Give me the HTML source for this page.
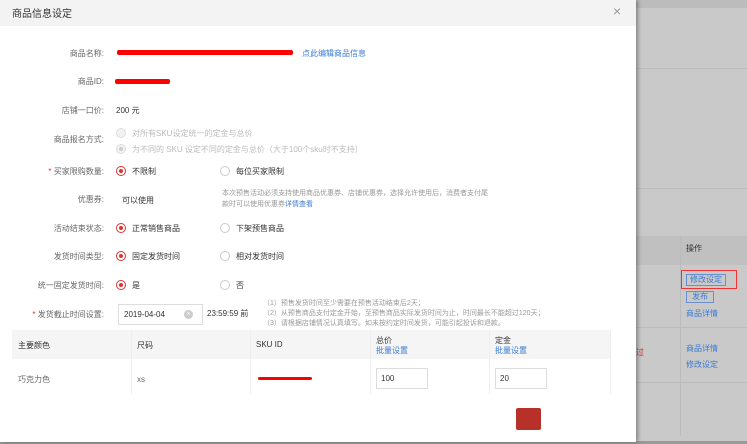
<!DOCTYPE html>
<html><head><meta charset="utf-8"><style>
*{margin:0;padding:0;box-sizing:border-box}
body{width:747px;height:444px;overflow:hidden;background:#c9c9c9;font-family:"Liberation Sans","Noto Sans CJK SC",sans-serif;font-size:8px;color:#333;position:relative}
.a{position:absolute;white-space:nowrap}
.lab{position:absolute;right:532px;color:#666;white-space:nowrap}
.modal{position:absolute;left:0;top:0;width:636px;height:442px;background:#fff;box-shadow:2px 0 4px rgba(0,0,0,.35);overflow:hidden}
.hd{height:26px;background:#f3f3f3;padding:5px 12px;font-size:10px;color:#333}
.r{position:absolute;width:10px;height:10px;border-radius:50%;border:1px solid #ccc;background:#fff}
.r.on{border-color:#d33}
.r.on::after{content:"";position:absolute;left:2px;top:2px;width:4px;height:4px;border-radius:50%;background:#d33}
.r.dis{background:#f2f2f2;border-color:#ddd}
.r.dis.on::after{background:#ccc}
.red{position:absolute;height:5px;background:#f00;border-radius:2px}
.blue{color:#3a7bd5}
.grey{color:#999}
</style></head><body>
<div class="a" style="left:636px;top:0;width:111px;height:8px;background:#bcbcbc"></div>
<div class="a" style="left:636px;top:68px;width:111px;height:1px;background:#bdbdbd"></div>
<div class="a" style="left:636px;top:188px;width:111px;height:1px;background:#bdbdbd"></div>
<div class="a" style="left:636px;top:236px;width:111px;height:29px;background:#c0c0c0"></div>
<div class="a" style="left:680px;top:236px;width:1px;height:200px;background:#bbb"></div>
<div class="a" style="left:636px;top:327px;width:111px;height:1px;background:#bbb"></div>
<div class="a" style="left:636px;top:382px;width:111px;height:1px;background:#bbb"></div>
<div class="a" style="left:686px;top:243px;color:#333">操作</div>
<div class="a" style="left:681px;top:270px;width:56px;height:19px;border:1px solid #e33"></div>
<div class="a blue" style="left:686px;top:274px;border:1px solid #6a8fd0;padding:0 3px;line-height:10px">修改设定</div>
<div class="a blue" style="left:686px;top:291px;border:1px solid #6a8fd0;padding:0 5px;line-height:10px">发布</div>
<div class="a blue" style="left:686px;top:308px">商品详情</div>
<div class="a blue" style="left:686px;top:343px">商品详情</div>
<div class="a blue" style="left:686px;top:359px">修改设定</div>
<div class="a" style="left:636px;top:347px;color:#c33">过</div>
<div class="a" style="left:0;top:441px;width:747px;height:3px;background:#9a9a9a"></div>

<div class="modal">
<div class="hd">商品信息设定</div>
<div class="a" style="left:613px;top:3px;font-size:14px;color:#999">×</div>

<div class="lab" style="top:48px">商品名称:</div>
<div class="red" style="left:117px;top:50px;width:176px"></div>
<div class="a blue" style="left:302px;top:48px">点此编辑商品信息</div>

<div class="lab" style="top:76px">商品ID:</div>
<div class="red" style="left:115px;top:79px;width:55px"></div>

<div class="lab" style="top:105px">店铺一口价:</div>
<div class="a" style="left:116px;top:105px">200 元</div>

<div class="lab" style="top:134px">商品报名方式:</div>
<div class="r dis" style="left:116px;top:128px"></div>
<div class="a" style="left:132px;top:128px;color:#bbb">对所有SKU设定统一的定金与总价</div>
<div class="r dis on" style="left:116px;top:144px"></div>
<div class="a" style="left:132px;top:144px;color:#bbb">为不同的 SKU 设定不同的定金与总价（大于100个sku时不支持）</div>

<div class="lab" style="top:166px"><span style="color:#d33">* </span>买家限购数量:</div>
<div class="r on" style="left:116px;top:166px"></div>
<div class="a" style="left:132px;top:166px">不限制</div>
<div class="r" style="left:220px;top:166px"></div>
<div class="a" style="left:236px;top:166px">每位买家限制</div>

<div class="lab" style="top:194px">优惠券:</div>
<div class="a" style="left:122px;top:195px">可以使用</div>
<div class="a grey" style="left:222px;top:188px;font-size:7px;line-height:11px">本次预售活动必须支持使用商品优惠券、店铺优惠券，选择允许使用后，消费者支付尾<br>款时可以使用优惠券<span class="blue">详情查看</span></div>

<div class="lab" style="top:223px">活动结束状态:</div>
<div class="r on" style="left:116px;top:223px"></div>
<div class="a" style="left:132px;top:223px">正常销售商品</div>
<div class="r" style="left:220px;top:223px"></div>
<div class="a" style="left:236px;top:223px">下架预售商品</div>

<div class="lab" style="top:251px">发货时间类型:</div>
<div class="r on" style="left:116px;top:251px"></div>
<div class="a" style="left:132px;top:251px">固定发货时间</div>
<div class="r" style="left:220px;top:251px"></div>
<div class="a" style="left:236px;top:251px">相对发货时间</div>

<div class="lab" style="top:280px">统一固定发货时间:</div>
<div class="r on" style="left:116px;top:280px"></div>
<div class="a" style="left:132px;top:280px">是</div>
<div class="r" style="left:220px;top:280px"></div>
<div class="a" style="left:236px;top:280px">否</div>

<div class="lab" style="top:309px"><span style="color:#d33">* </span>发货截止时间设置:</div>
<div class="a" style="left:118px;top:304px;width:85px;height:21px;border:1px solid #ddd"></div>
<div class="a" style="left:124px;top:310px">2019-04-04</div>
<div class="a" style="left:184px;top:310px;width:9px;height:9px;border-radius:50%;background:#ccc;color:#fff;font-size:7px;line-height:9px;text-align:center">×</div>
<div class="a" style="left:207px;top:308px">23:59:59 前</div>
<div class="a grey" style="left:263px;top:299px;font-size:7px;line-height:10px">（1）预售发货时间至少需要在预售活动结束后2天；<br>（2）从预售商品支付定金开始，至预售商品实际发货时间为止，时间最长不能超过120天；<br>（3）请根据店铺情况认真填写。如未按约定时间发货，可能引起投诉和退款。</div>

<div class="a" style="left:12px;top:330px;width:598px;height:29px;background:#f5f5f5"></div>
<div class="a" style="left:131px;top:330px;width:1px;height:64px;background:#eee"></div>
<div class="a" style="left:250px;top:330px;width:1px;height:64px;background:#eee"></div>
<div class="a" style="left:370px;top:330px;width:1px;height:64px;background:#eee"></div>
<div class="a" style="left:489px;top:330px;width:1px;height:64px;background:#eee"></div>
<div class="a" style="left:610px;top:330px;width:1px;height:64px;background:#eee"></div>
<div class="a" style="left:18px;top:340px">主要颜色</div>
<div class="a" style="left:137px;top:340px">尺码</div>
<div class="a" style="left:256px;top:340px">SKU ID</div>
<div class="a" style="left:376px;top:336px;line-height:10px">总价<br><span class="blue">批量设置</span></div>
<div class="a" style="left:495px;top:336px;line-height:10px">定金<br><span class="blue">批量设置</span></div>
<div class="a" style="left:18px;top:374px;color:#666">巧克力色</div>
<div class="a" style="left:137px;top:375px;color:#666">xs</div>
<div class="red" style="left:258px;top:377px;width:54px;height:3px"></div>
<div class="a" style="left:376px;top:368px;width:52px;height:21px;border:1px solid #ddd;padding:5px 4px">100</div>
<div class="a" style="left:495px;top:368px;width:52px;height:21px;border:1px solid #ddd;padding:5px 4px">20</div>
<div class="a" style="left:516px;top:408px;width:25px;height:22px;background:#b8302a;border-radius:2px"></div>
</div>
</body></html>
